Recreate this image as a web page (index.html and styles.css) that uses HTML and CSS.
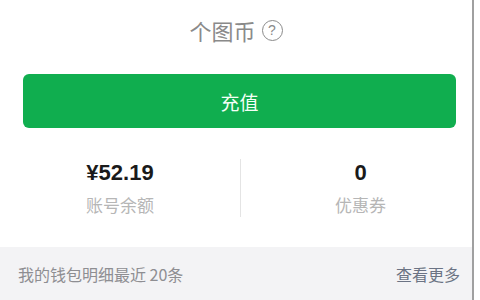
FILE: index.html
```html
<!DOCTYPE html>
<html lang="zh">
  <head>
    <meta charset="UTF-8" />
    <meta name="viewport" content="width=device-width, initial-scale=1.0" />
    <title>我的钱包</title>
    <link rel="stylesheet" href="styles.css">
  </head>
  <body>
    <div class="wallet">
      <div class="coin-title">
        <span>个图币</span>
        <span class="help">?</span>
      </div>
      <div class="btn-wrap">
        <button class="recharge">充值</button>
      </div>
      <div class="stats">
        <div class="stat">
          <div class="value">¥52.19</div>
          <div class="label">账号余额</div>
        </div>
        <div class="stat">
          <div class="value">0</div>
          <div class="label">优惠券</div>
        </div>
      </div>
      <div class="detail-bar">
        <span class="detail-text">我的钱包明细最近 20条</span>
        <span class="more">查看更多</span>
      </div>
    </div>
  </body>
</html>
```

FILE: styles.css
```css
body {
  margin: 0;
  background: #fff;
  font-family: "Noto Sans CJK SC", "Liberation Sans", sans-serif;
}
.wallet {
  width: 472px;
  height: 300px;
  border-right: 2px solid #a0a0a0;
  display: flex;
  flex-direction: column;
}
.coin-title {
  display: flex;
  justify-content: center;
  align-items: center;
  gap: 6px;
  height: 60px;
  color: #8a8a8a;
  font-size: 22px;
}
.help {
  width: 19px;
  height: 19px;
  border: 1.5px solid #8a8a8a;
  border-radius: 50%;
  font-size: 14px;
  line-height: 19px;
  text-align: center;
  font-family: "Liberation Sans", sans-serif;
}
.btn-wrap {
  padding: 14px 16px 0 23px;
}
.recharge {
  width: 100%;
  height: 54px;
  border: none;
  border-radius: 6px;
  background-color: #10ae4f;
  color: #f4fff6;
  font-size: 19px;
  font-family: "Noto Sans CJK SC", sans-serif;
}
.stats {
  display: grid;
  grid-template-columns: 240px 1fr;
  align-items: center;
  margin-top: 29px;
  height: 62px;
}
.stat {
  text-align: center;
}
.stat + .stat {
  border-left: 1px solid #e4e4e4;
  padding-left: 8px;
}
.value {
  font-family: "Liberation Sans", sans-serif;
  font-weight: bold;
  font-size: 22px;
  color: #1a1a1a;
  line-height: 28px;
}
.label {
  margin-top: 6px;
  font-size: 17px;
  color: #b6b6b6;
  line-height: 24px;
}
.detail-bar {
  margin-top: 28px;
  height: 53px;
  background: #f3f3f5;
  display: flex;
  justify-content: space-between;
  align-items: center;
  padding: 0 12px 0 18px;
  font-size: 16px;
}
.detail-text {
  color: #8e8e92;
}
.more {
  color: #6b7384;
}
```
